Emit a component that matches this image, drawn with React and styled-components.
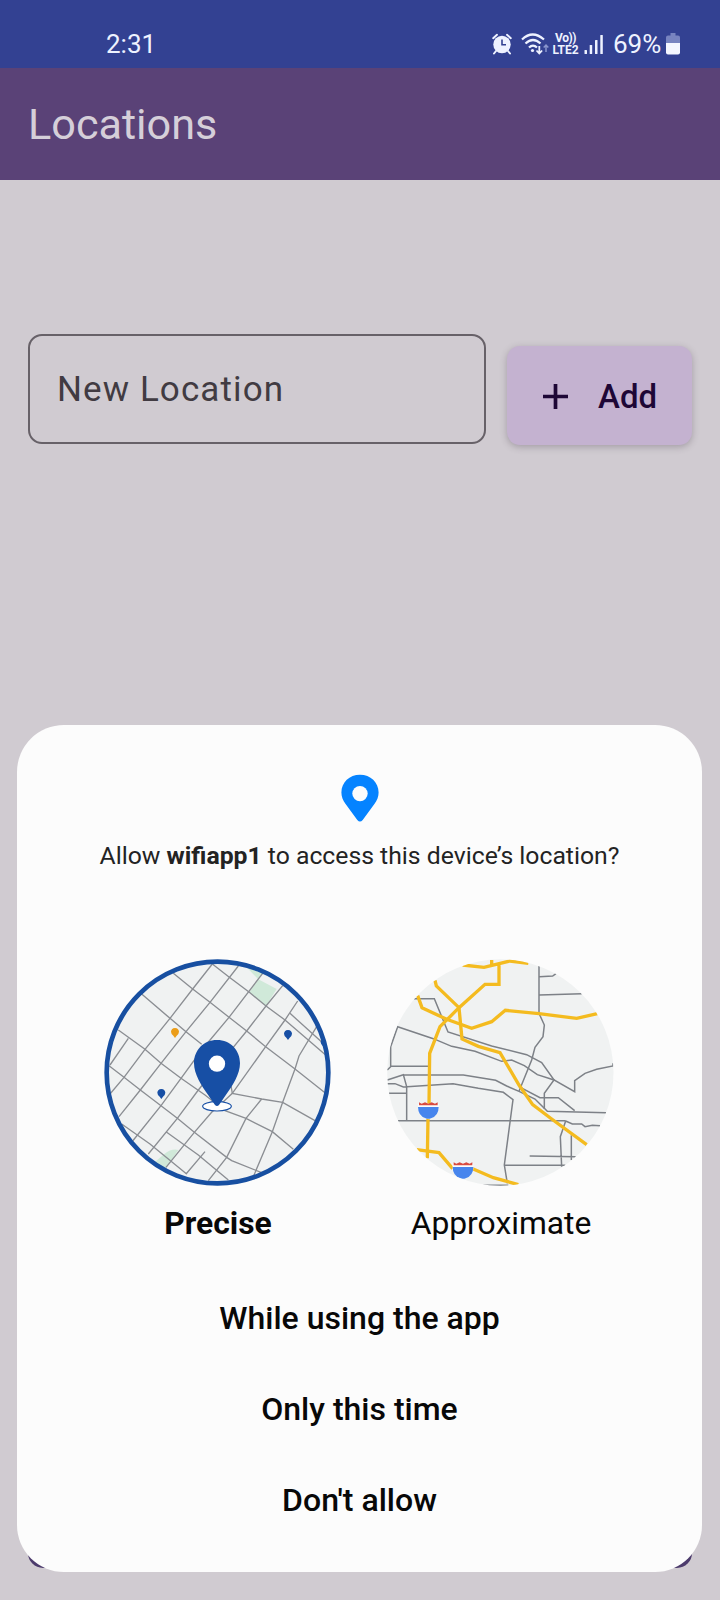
import React from 'react';
import styled, { createGlobalStyle } from 'styled-components';

const GlobalStyle = createGlobalStyle`
  * { box-sizing: border-box; }
  body { margin: 0; background: #d0cbd1; font-family: Roboto, "Liberation Sans", sans-serif; }
  button { font: inherit; border: 0; background: none; padding: 0; color: inherit; }
  svg { display: block; flex: none; }
`;

const Screen = styled.main`
  position: relative;
  width: 720px;
  height: 1600px;
  overflow: hidden;
  background: #d0cbd1;
`;

const StatusBar = styled.header`
  height: 68px;
  padding: 20px 40px 0 106px;
  display: flex;
  align-items: center;
  justify-content: space-between;
  background: #334192;
  color: #eef2ff;
  font-size: 26px;
  line-height: 30px;
`;

const StatusIcons = styled.div`
  display: flex;
  align-items: center;
`;

const Percent = styled.span`
  width: 48px;
  margin: 0 5px 0 9px;
  white-space: nowrap;
`;

const Network = styled.span`
  width: 27px;
  margin: 0 5px 0 3px;
  display: flex;
  flex-direction: column;
  align-items: center;
  font-size: 12px;
  font-weight: 700;
  line-height: 12px;
  white-space: nowrap;
`;

const VoLabel = styled.span`
  letter-spacing: -0.5px;
`;

const AppBar = styled.div`
  height: 112px;
  padding: 1px 0 0 28px;
  display: flex;
  align-items: center;
  background: #5a4277;
`;

const Title = styled.h1`
  margin: 0;
  color: #d5cfd9;
  font-size: 43.2px;
  font-weight: 400;
  line-height: 53px;
`;

const Form = styled.div`
  padding: 154px 28px 0;
  display: flex;
  align-items: flex-end;
  justify-content: space-between;
`;

const Field = styled.div`
  width: 458px;
  height: 110px;
  padding-left: 27px;
  display: flex;
  align-items: center;
  border: 2px solid #676168;
  border-radius: 14px;
  color: #413b42;
  font-size: 35px;
  letter-spacing: 1.1px;
`;

const AddButton = styled.button`
  && {
    width: 185px;
    height: 99px;
    margin-bottom: -1px;
    padding: 2px 0 0 36px;
    display: flex;
    align-items: center;
    gap: 30px;
    border-radius: 13px;
    background: #c4b2d0;
    color: #1e0736;
    font-size: 33px;
    font-weight: 500;
    box-shadow: 0 2px 7px rgba(70, 60, 75, 0.32);
  }
`;

const BottomButton = styled.div`
  position: absolute;
  left: 28px;
  right: 28px;
  bottom: 32px;
  height: 100px;
  border-radius: 15px;
  background: #4c3b6c;
`;

const Sheet = styled.section`
  position: absolute;
  left: 17px;
  top: 725px;
  width: 685px;
  height: 847px;
  padding-top: 49px;
  display: flex;
  flex-direction: column;
  align-items: center;
  border-radius: 47px;
  background: #fcfcfc;
  color: #080808;
`;

const Question = styled.p`
  margin: 16px 0 0;
  color: #232323;
  font-size: 24.76px;
  line-height: 34px;
  white-space: nowrap;
`;

const Accuracy = styled.div`
  margin-top: 77px;
  display: flex;
  gap: 40px;
`;

const Choice = styled.div`
  width: 245px;
  display: flex;
  flex-direction: column;
  align-items: center;
  font-size: 31.8px;
  font-weight: ${(p) => (p.$selected ? 700 : 400)};
  line-height: 40px;
`;

const ChoiceLabel = styled.span`
  margin-top: 8px;
  padding: ${(p) => (p.$selected ? '0 0 0 2px' : '0 2px 0 0')};
`;

const Actions = styled.div`
  margin-top: 29px;
  display: flex;
  flex-direction: column;
  align-items: center;
`;

const Action = styled.button`
  && {
    height: 91px;
    font-size: 32px;
    font-weight: 500;
  }
`;

const AlarmSlot = styled.span`
  margin-right: 9px;
`;

const AlarmIcon = () => (
  <svg width="20" height="22" viewBox="0 0 20 22">
    <circle cx="10" cy="11.500" r="8.700" fill="#eef2ff" />
    <path d="M1.200 5.200 5 1.800M18.800 5.200 15 1.800M4 18 2 20.500M16 18l2 2.500" stroke="#eef2ff" strokeWidth="2" strokeLinecap="round" />
    <path d="M10 6.500v5.300h4" fill="none" stroke="#334192" strokeWidth="1.600" />
  </svg>
);

const WifiIcon = () => (
  <svg width="28" height="22" viewBox="0 0 28 22" fill="none" stroke="#eef2ff" strokeWidth="2.200">
    <path d="M1 6.500Q11.500-3.500 23 6.500M4.500 10.500q7.500-7 15 0M8 14.500q4-4 8 0" />
    <circle cx="11.500" cy="17.500" r="1.600" fill="#eef2ff" stroke="none" />
    <path d="M18.300 13v7.500M15.500 17.500l2.800 3 2.800-3" strokeWidth="1.800" />
    <path d="M25 19v-7M22.700 14.500 25 12l2.300 2.500" stroke="#8995cd" strokeWidth="1.500" />
  </svg>
);

const SignalIcon = () => (
  <svg width="20" height="21" viewBox="0 0 20 21" fill="#eef2ff">
    <rect x=".5" y="16" width="2.500" height="4" rx=".5" />
    <rect x="5.700" y="11" width="2.500" height="9" rx=".5" />
    <rect x="11" y="6" width="2.500" height="14" rx=".5" />
    <rect x="16.300" y="1" width="2.500" height="19" rx=".5" />
  </svg>
);

const BatteryIcon = () => (
  <svg width="14" height="22" viewBox="0 0 14 22">
    <path d="M4.500 0h5v2.500H12q2 0 2 2V11H0V4.500q0-2 2-2h2.500z" fill="#7884c0" />
    <path d="M0 10h14v9.500q0 2-2 2H2q-2 0-2-2z" fill="#f4f6ff" />
  </svg>
);

const PlusIcon = () => (
  <svg width="25" height="25" viewBox="0 0 25 25">
    <path d="M12.500 0v25M0 12.500h25" stroke="#1e0736" strokeWidth="3.700" />
  </svg>
);

const PinIcon = () => (
  <svg width="38" height="49" viewBox="0 0 38 49">
    <path d="M19 .7C8.500 .7.400 8.300.400 18.500c0 4.200 1.500 7.900 4.200 11.500L16.300 46q2.700 3 5.400 0L33.400 30c2.700-3.600 4.200-7.300 4.200-11.500C37.600 8.300 29.500.7 19 .7z" fill="#0583ff" />
    <circle cx="19" cy="19.600" r="7.700" fill="#fcfcfc" />
  </svg>
);

const SmallPin = ({ x, y, color = '#174fa5' }) => (
  <path transform={`translate(${x} ${y})`} d="M0-14C-8-14-12-8-12-3Q-12 3-5 9L0 16 5 9Q12 3 12-3C12-8 8-14 0-14z" fill={color} />
);

const PreciseMap = () => (
  <svg width="245" height="245" viewBox="0 0 735 735">
    <defs>
      <clipPath id="precise"><circle cx="367.500" cy="367.500" r="333" /></clipPath>
    </defs>
    <g clipPath="url(#precise)">
      <rect width="735" height="735" fill="#f0f2f2" />
      <path d="M455 52 503 70 490 88 545 117 513 168 463 127 490 88zM175 640 208 612Q230 595 250 600L213 655z" fill="#d0e9d9" />
      <g fill="none" stroke="#8b8e93" strokeWidth="4">
        <path d="M352 42 293 117 225 205 150 298 87 382 45 432M430 48 345 157 273 245 198 340 136 420 72 500M503 70 402 202 320 300 258 385 198 467 113 573M563 107 513 168 455 243 400 310 310 420 247 505 160 612M608 153 570 210 512 290 412 430 385 455 350 487 298 547 213 652M100 265 45 345M330 605 273 672M500 447 453 505 395 622 340 692M665 230 612 318 600 357 563 457 532 545 475 680" />
        <path d="M352 42 403 82 463 127 513 168 570 210 692 315M235 70 293 117 345 157 402 202 455 243 512 290 600 357 690 428M140 132 225 205 273 245 320 283M70 240 150 298 198 340 258 385 330 435 390 482 453 505 532 545 595 598M42 347 87 382 136 420 198 467 247 505 298 547 395 622 410 632 500 668M80 522 165 582 275 672M213 545 310 615 400 690M405 390 412 430 500 447 563 457 660 512M585 190 690 285" />
      </g>
      <SmallPin x={240} y={248} color="#eb9d19" />
      <SmallPin x={199} y={431} />
      <SmallPin x={579} y={254} />
      <SmallPin x={689} y={280} />
    </g>
    <circle cx="367.500" cy="367.500" r="332.500" fill="none" stroke="#174fa1" strokeWidth="14" />
    <ellipse cx="366" cy="469" rx="43" ry="14" fill="#fff" stroke="#174fa5" strokeWidth="3.500" />
    <path d="M366 270c-41 0-69 31-69 70 0 32 22 67 43 96l20 29q6 6 12 0l20-29c21-29 43-64 43-96 0-39-28-70-69-70z" fill="#174fa5" />
    <circle cx="366" cy="341" r="24.500" fill="#fff" />
  </svg>
);

const Shield = ({ x, y }) => (
  <g transform={`translate(${x} ${y})`}>
    <path d="M-31-16H31V0Q28 20 0 31-28 20-31 0z" fill="#fcfcfc" />
    <path d="M-28-20-20-16-10-20 0-16 10-20 20-16 28-20V-11H-28z" fill="#d94b40" />
    <path d="M-31-6H31Q31 20 8 28 0 31-8 28-31 20-31-6z" fill="#4785ed" />
  </g>
);

const ApproximateMap = () => (
  <svg width="245" height="245" viewBox="0 0 735 735">
    <defs>
      <clipPath id="approximate"><circle cx="361" cy="367.500" r="339.500" /></clipPath>
    </defs>
    <g clipPath="url(#approximate)">
      <rect width="735" height="735" fill="#f0f2f2" />
      <g fill="none" stroke="#7d8187" strokeWidth="4.500">
        <path d="M102 146H163L204 246 335 288 440 314 485 338 522 390 584 425V392L615 370 650 358 699 348V340" />
        <path d="M22 360 32 350V290L53 230 160 266 215 289 285 304 365 334 395 330 433 347 472 374 522 390 493 430V477" />
        <path d="M32 349H148M22 390 70 374 80 410V510M70 375H250L347 391 380 408 417 424 465 447 502 484 678 488M22 401H45L70 411 219 401 295 415 370 427 399 449 373 645 382 700" />
        <path d="M27 430H80M54 512H557M477 48V190L493 225 489 260 465 292 455 330 417 424M478 80 518 78 528 71M478 135 605 131M417 410 480 443H535L584 482M557 513 541 560 545 650M557 513 577 522H605L615 530 637 526 660 527M574 556V630M449 618 587 620M374 646H556M310 706H385" />
      </g>
      <g fill="none" stroke="#f4bb1f" strokeWidth="10" strokeLinejoin="miter">
        <path d="M248 45 312 52 390 33 445 40M335 30V48M357 43V103H315L237 173 180 230 149 310 147 465M144 505 142 625" />
        <path d="M165 91 169 108 237 173 246 267 295 289 360 308 417 405 458 464 515 507 620 584" />
        <path d="M113 137 126 173 200 208 275 235 335 215 376 181 477 191 590 205 652 191M110 599 177 608 218 656M278 656 340 683 415 704" />
      </g>
      <Shield x={145} y={477} />
      <Shield x={249} y={657} />
    </g>
  </svg>
);

const App = () => (
  <>
    <GlobalStyle />
    <Screen>
      <StatusBar>
        <span>2:31</span>
        <StatusIcons>
          <AlarmSlot><AlarmIcon /></AlarmSlot>
          <WifiIcon />
          <Network><VoLabel>Vo))</VoLabel><span>LTE2</span></Network>
          <SignalIcon />
          <Percent>69%</Percent>
          <BatteryIcon />
        </StatusIcons>
      </StatusBar>
      <AppBar><Title>Locations</Title></AppBar>
      <Form>
        <Field>New Location</Field>
        <AddButton><PlusIcon />Add</AddButton>
      </Form>
      <BottomButton />
      <Sheet>
        <PinIcon />
        <Question>Allow <b>wifiapp1</b> to access this device’s location?</Question>
        <Accuracy>
          <Choice $selected>
            <PreciseMap />
            <ChoiceLabel $selected>Precise</ChoiceLabel>
          </Choice>
          <Choice>
            <ApproximateMap />
            <ChoiceLabel>Approximate</ChoiceLabel>
          </Choice>
        </Accuracy>
        <Actions>
          <Action>While using the app</Action>
          <Action>Only this time</Action>
          <Action>Don't allow</Action>
        </Actions>
      </Sheet>
    </Screen>
  </>
);

export default App;
